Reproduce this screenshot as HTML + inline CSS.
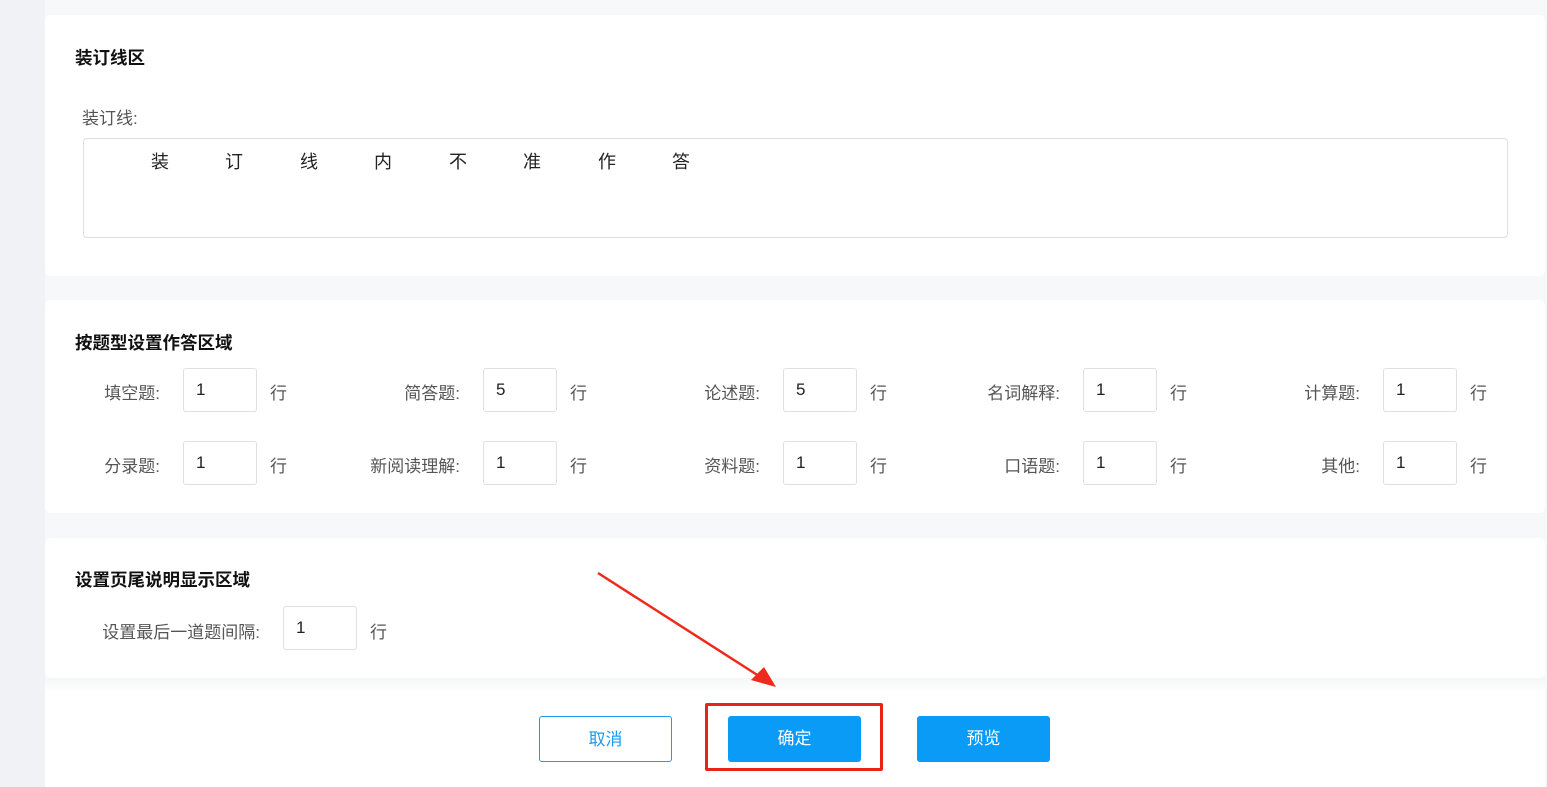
<!DOCTYPE html>
<html><head><meta charset="utf-8"><style>
body{margin:0;width:1547px;height:787px;background:#f7f8fa;position:relative;overflow:hidden;font-family:"Liberation Sans","Noto Sans CJK SC",sans-serif;color:#333}
.strip{position:absolute;left:0;top:0;width:45px;height:787px;background:#f0f2f5}
.card{position:absolute;left:45px;width:1500px;background:#fff;border-radius:6px}
.t{position:absolute;font-weight:bold;font-size:17.5px;color:#111}
.l{position:absolute;font-size:17px;color:#555;text-align:right}
.in{position:absolute;border:1px solid #dcdfe6;border-radius:3px;font-size:17px;line-height:42px;padding-left:12px;box-sizing:border-box;width:74px;height:44px;color:#222}
.h{position:absolute;font-size:17px;color:#555}
.btn{position:absolute;top:716px;width:133px;height:46px;border-radius:3px;font-size:17px;line-height:46px;text-align:center;box-sizing:border-box}
</style></head><body>
<div class="strip"></div>
<div class="card" style="top:15px;height:261px"></div>
<div class="card" style="top:300px;height:213px"></div>
<div class="card" style="top:538px;height:140px"></div>
<div style="position:absolute;left:45px;top:678px;width:1500px;height:109px;background:linear-gradient(#f5f6f7,#fff 14px)"></div>
<div class="t" style="left:75px;top:45px">装订线区</div>
<div class="h" style="left:82px;top:104px">装订线:</div>
<div style="position:absolute;left:83px;top:138px;width:1423px;height:98px;border:1px solid #dcdfe6;border-radius:4px"></div>
<div style="position:absolute;left:151px;top:148px;font-size:18px;color:#222">
<span style="position:absolute;left:0">装</span><span style="position:absolute;left:74px">订</span><span style="position:absolute;left:149px">线</span><span style="position:absolute;left:223px">内</span><span style="position:absolute;left:298px">不</span><span style="position:absolute;left:372px">准</span><span style="position:absolute;left:447px">作</span><span style="position:absolute;left:521px">答</span></div>
<div class="t" style="left:75px;top:330px">按题型设置作答区域</div>
<div id="rows"></div>
<div class="t" style="left:75px;top:567px">设置页尾说明显示区域</div>
<div class="l" style="left:40px;width:220px;top:618px">设置最后一道题间隔:</div>
<div class="in" style="left:283px;top:606px">1</div>
<div class="h" style="left:370px;top:618px">行</div>
<div class="btn" style="left:539px;border:1px solid #1a9cf0;color:#1a9cf0;background:#fff">取消</div>
<div class="btn" style="left:728px;background:#0a9bf7;color:#fff">确定</div>
<div class="btn" style="left:917px;background:#0a9bf7;color:#fff">预览</div>
<div style="position:absolute;left:705px;top:703px;width:178px;height:68px;border:3px solid #e8231b;border-radius:2px;box-sizing:border-box"></div>
<svg style="position:absolute;left:0;top:0" width="1547" height="787"><line x1="598" y1="573" x2="762" y2="678" stroke="#ee2a1c" stroke-width="2.5"/><polygon points="776,687 751,680 764,667" fill="#ee2a1c"/></svg>
<script>
var r=[["填空题","1","简答题","5","论述题","5","名词解释","1","计算题","1"],["分录题","1","新阅读理解","1","资料题","1","口语题","1","其他","1"]];
var h="";r.forEach(function(row,i){var y=i?441:368;for(var j=0;j<5;j++){var x=183+300*j;h+='<div class="l" style="left:'+(x-203)+'px;width:180px;top:'+(y+11)+'px">'+row[2*j]+':</div><div class="in" style="left:'+x+'px;top:'+y+'px">'+row[2*j+1]+'</div><div class="h" style="left:'+(x+87)+'px;top:'+(y+11)+'px">行</div>';}});
document.getElementById("rows").innerHTML=h;
</script>
</body></html>
